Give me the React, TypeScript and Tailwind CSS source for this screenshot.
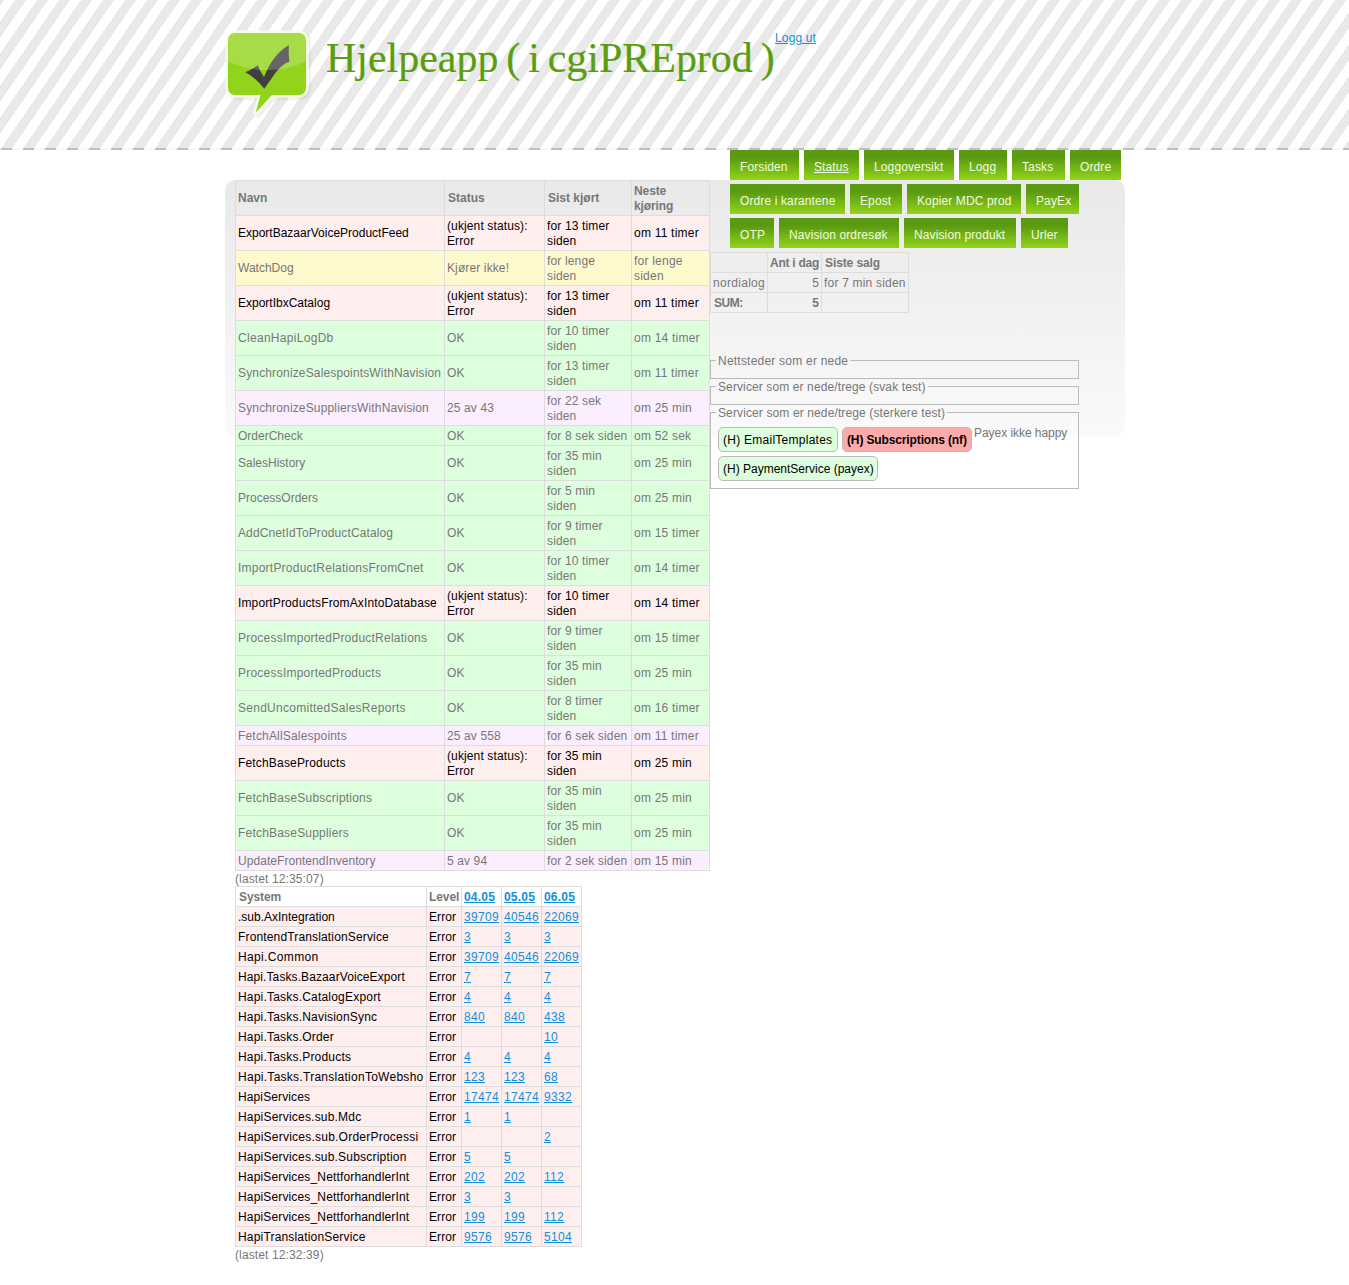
type Task = [kind: string, name: string, spacing: number, status: string, last: string, next: string];

const rowStyles: Record<string, string> = {
  e: 'bg-[#ffeeee] text-black',
  w: 'bg-[#fffacd]',
  o: 'bg-[#ddffdd]',
  r: 'bg-[#fbeeff]',
};

const tasks: Task[] = [
  ['e', 'ExportBazaarVoiceProductFeed', 0, '(ukjent status): Error', 'for 13 timer siden', 'om 11 timer'],
  ['w', 'WatchDog', 0, 'Kjører ikke!', 'for lenge siden', 'for lenge siden'],
  ['e', 'ExportIbxCatalog', 0, '(ukjent status): Error', 'for 13 timer siden', 'om 11 timer'],
  ['o', 'CleanHapiLogDb', 0.3, 'OK', 'for 10 timer siden', 'om 14 timer'],
  ['o', 'SynchronizeSalespointsWithNavision', 0.15, 'OK', 'for 13 timer siden', 'om 11 timer'],
  ['r', 'SynchronizeSuppliersWithNavision', 0.15, '25 av 43', 'for 22 sek siden', 'om 25 min'],
  ['o', 'OrderCheck', 0, 'OK', 'for 8 sek siden', 'om 52 sek'],
  ['o', 'SalesHistory', 0, 'OK', 'for 35 min siden', 'om 25 min'],
  ['o', 'ProcessOrders', 0, 'OK', 'for 5 min siden', 'om 25 min'],
  ['o', 'AddCnetIdToProductCatalog', 0.12, 'OK', 'for 9 timer siden', 'om 15 timer'],
  ['o', 'ImportProductRelationsFromCnet', 0.23, 'OK', 'for 10 timer siden', 'om 14 timer'],
  ['e', 'ImportProductsFromAxIntoDatabase', 0.13, '(ukjent status): Error', 'for 10 timer siden', 'om 14 timer'],
  ['o', 'ProcessImportedProductRelations', 0.23, 'OK', 'for 9 timer siden', 'om 15 timer'],
  ['o', 'ProcessImportedProducts', 0.22, 'OK', 'for 35 min siden', 'om 25 min'],
  ['o', 'SendUncomittedSalesReports', 0.27, 'OK', 'for 8 timer siden', 'om 16 timer'],
  ['r', 'FetchAllSalespoints', 0.18, '25 av 558', 'for 6 sek siden', 'om 11 timer'],
  ['e', 'FetchBaseProducts', 0.17, '(ukjent status): Error', 'for 35 min siden', 'om 25 min'],
  ['o', 'FetchBaseSubscriptions', 0.22, 'OK', 'for 35 min siden', 'om 25 min'],
  ['o', 'FetchBaseSuppliers', 0.2, 'OK', 'for 35 min siden', 'om 25 min'],
  ['r', 'UpdateFrontendInventory', 0.06, '5 av 94', 'for 2 sek siden', 'om 15 min'],
];

const systems: [string, number, string[]][] = [
  ['.sub.AxIntegration', 0, ['39709', '40546', '22069']],
  ['FrontendTranslationService', 0.15, ['3', '3', '3']],
  ['Hapi.Common', 0.36, ['39709', '40546', '22069']],
  ['Hapi.Tasks.BazaarVoiceExport', 0.1, ['7', '7', '7']],
  ['Hapi.Tasks.CatalogExport', 0.2, ['4', '4', '4']],
  ['Hapi.Tasks.NavisionSync', 0.2, ['840', '840', '438']],
  ['Hapi.Tasks.Order', 0.2, ['', '', '10']],
  ['Hapi.Tasks.Products', 0.2, ['4', '4', '4']],
  ['Hapi.Tasks.TranslationToWebsho', 0.27, ['123', '123', '68']],
  ['HapiServices', 0.12, ['17474', '17474', '9332']],
  ['HapiServices.sub.Mdc', 0.2, ['1', '1', '']],
  ['HapiServices.sub.OrderProcessi', 0.23, ['', '', '2']],
  ['HapiServices.sub.Subscription', 0.2, ['5', '5', '']],
  ['HapiServices_NettforhandlerInt', 0.15, ['202', '202', '112']],
  ['HapiServices_NettforhandlerInt', 0.15, ['3', '3', '']],
  ['HapiServices_NettforhandlerInt', 0.15, ['199', '199', '112']],
  ['HapiTranslationService', 0.18, ['9576', '9576', '5104']],
];

const menu: [string, string][][] = [
  [
    ['Forsiden', 'w-[69px]'],
    ['Status', 'w-[55px] underline'],
    ['Loggoversikt', 'w-[90px]'],
    ['Logg', 'w-[48px]'],
    ['Tasks', 'w-[53px]'],
    ['Ordre', 'w-[51px]'],
  ],
  [
    ['Ordre i karantene', 'w-[115px]'],
    ['Epost', 'w-[52px]'],
    ['Kopier MDC prod', 'w-[114px]'],
    ['PayEx', 'w-[53px]'],
  ],
  [
    ['OTP', 'w-[44px]'],
    ['Navision ordresøk', 'w-[120px]'],
    ['Navision produkt', 'w-[112px]'],
    ['Urler', 'w-[47px]'],
  ],
];

const cell = 'border border-[#dddddd] px-[2px] pt-[1px] pb-0 align-middle';
const head = 'border border-[#dddddd] px-[3px] pt-[1px] pb-0 text-left align-middle font-bold';
const link = 'text-[#1090dd] underline';

const bubble =
  'M10 3h64a7 7 0 0 1 7 7v48a7 7 0 0 1-7 7H47L30.700 82.700 35.500 65H10a7 7 0 0 1-7-7V10a7 7 0 0 1 7-7z';

function Logo() {
  return (
    <svg width="90" height="90" viewBox="0 0 90 90" className="shrink-0">
      <defs>
        <filter id="soft" x="-10%" y="-10%" width="125%" height="125%">
          <feDropShadow dx="2" dy="2" stdDeviation="1.2" floodColor="#000" floodOpacity="0.08" />
        </filter>
      </defs>
      <path d={bubble} fill="#f3fee6" stroke="#f3fee6" strokeWidth="5" strokeLinejoin="round" filter="url(#soft)" />
      <path d={bubble} fill="#92d41b" />
      <path
        d="M20.300 42.300Q27 39.500 32.700 35.300 35 41.500 39 47 48 24 64 15 63.300 22 64.300 31.700 57 34 50 43.500L39.300 58.700Q30 47 20.300 42.300z"
        fill="#404040"
      />
      <path d="M10 3h64a7 7 0 0 1 7 7v21Q64 40 42 40T3 31V10a7 7 0 0 1 7-7z" fill="#fff" fillOpacity="0.2" />
    </svg>
  );
}

function Chip({ className, children }: { className: string; children: string }) {
  return (
    <span
      className={`flex h-[25px] items-center rounded-[5px] border border-[#bbbbbb] pt-[1px] pl-[4px] whitespace-nowrap text-black ${className}`}
    >
      {children}
    </span>
  );
}

export default function App() {
  return (
    <div className="h-[1285px] w-[1349px] overflow-hidden bg-white font-['Liberation_Sans',Arial,sans-serif] text-[12px] leading-[15px] text-[#777777]">
      <header className="h-[150px]">
        <div className="h-[148px] bg-[repeating-linear-gradient(124.51deg,#e9e9e9_0px,#e9e9e9_3.3px,#ffffff_3.3px,#ffffff_12.36px,#e9e9e9_12.36px,#e9e9e9_18.13px)] pt-[30px] pl-[225px]">
          <div className="flex items-start">
            <Logo />
            <h1 className="mt-[3px] ml-[11px] w-[449px] font-['Liberation_Serif',serif] text-[42px] leading-[50px] tracking-[-0.02px] whitespace-nowrap text-[#5a9e10] [-webkit-text-stroke:0.2px_#5a9e10] [word-spacing:-2.6px]">
              Hjelpeapp ( i cgiPREprod )
            </h1>
            <a href="#" className={`mt-[1px] tracking-[0.15px] ${link}`}>
              Logg ut
            </a>
          </div>
        </div>
        <div className="h-[2px] bg-[repeating-linear-gradient(90deg,#f7f7f7_0px,#f7f7f7_1px,#bdbdbd_1px,#bdbdbd_12px,#f7f7f7_12px,#f7f7f7_22px)]" />
      </header>

      <div className="relative ml-[225px] w-[900px]">
        <div className="absolute inset-x-0 top-[30px] h-[256px] rounded-[10px] bg-linear-to-b from-[#e9e9e9] to-[#fafafa]" />
        <div className="relative flex items-start pl-[10px]">
          <div className="w-[475px] shrink-0 pt-[30px]">
            <table className="w-[475px] table-fixed border-collapse">
              <colgroup>
                <col className="w-[209px]" />
                <col className="w-[100px]" />
                <col className="w-[87px]" />
                <col className="w-[78px]" />
              </colgroup>
              <thead>
                <tr className="h-[35px]">
                  <th className={`${head} px-[2px]!`}>Navn</th>
                  <th className={head}>Status</th>
                  <th className={head}>Sist kjørt</th>
                  <th className={`${head} px-[2px]! tracking-[-0.1px]`}>Neste kjøring</th>
                </tr>
              </thead>
              <tbody>
                {tasks.map(([kind, name, spacing, status, last, next]) => {
                  const short = /^for \d sek/.test(last);
                  return (
                    <tr key={name} className={`${rowStyles[kind]} ${short ? 'h-[20px]' : 'h-[35px]'}`}>
                      <td className={`${cell} whitespace-nowrap`} style={{ letterSpacing: spacing }}>
                        {name}
                      </td>
                      <td className={`${cell} tracking-[0.12px]`}>{status}</td>
                      <td className={`${cell} tracking-[0.15px] whitespace-nowrap`}>
                        {last.replace(/ siden$/, '')}
                        {short ? ' ' : <br />}
                        siden
                      </td>
                      <td className={`${cell} tracking-[0.22px]`}>{next}</td>
                    </tr>
                  );
                })}
              </tbody>
            </table>
            <p className="relative top-[1px] tracking-[0.12px]">(lastet 12:35:07)</p>
            <table className="w-[347px] table-fixed border-collapse">
              <colgroup>
                <col className="w-[191px]" />
                <col className="w-[35px]" />
                <col className="w-[40px]" />
                <col className="w-[40px]" />
                <col className="w-[40px]" />
              </colgroup>
              <thead>
                <tr className="h-[20px]">
                  <th className={`${head} tracking-[-0.1px]`}>System</th>
                  <th className={`${head} px-[2px]! tracking-[-0.1px]`}>Level</th>
                  {['04.05', '05.05', '06.05'].map((d) => (
                    <th key={d} className={`${head} px-[2px]! tracking-[0.2px]`}>
                      <a href="#" className={link}>
                        {d}
                      </a>
                    </th>
                  ))}
                </tr>
              </thead>
              <tbody>
                {systems.map(([name, spacing, counts], i) => (
                  <tr key={i} className="h-[20px] bg-[#ffeeee] text-black">
                    <td className={`${cell} whitespace-nowrap`} style={{ letterSpacing: spacing }}>
                      {name}
                    </td>
                    <td className={`${cell} tracking-[0.1px]`}>Error</td>
                    {counts.map((c, j) => (
                      <td key={j} className={`${cell} tracking-[0.33px]`}>
                        {c && (
                          <a href="#" className={link}>
                            {c}
                          </a>
                        )}
                      </td>
                    ))}
                  </tr>
                ))}
              </tbody>
            </table>
            <p className="relative top-[1px] tracking-[0.12px]">(lastet 12:32:39)</p>
          </div>

          <div className="w-[415px] shrink-0">
            <nav className="flex flex-col gap-[4px] pl-[20px] tracking-[0.12px]">
              {menu.map((row, i) => (
                <div key={i} className="flex gap-[5px]">
                  {row.map(([label, style]) => (
                    <a
                      key={label}
                      href="#"
                      className={`flex h-[30px] shrink-0 items-center bg-linear-to-b from-[#5a9a10] from-25% to-[#92d41b] pt-[4px] pl-[10px] whitespace-nowrap text-[#f0fde0] ${style}`}
                    >
                      {label}
                    </a>
                  ))}
                </div>
              ))}
            </nav>

            <table className="mt-[4px] w-[199px] table-fixed border-collapse">
              <colgroup>
                <col className="w-[57px]" />
                <col className="w-[54px]" />
                <col className="w-[87px]" />
              </colgroup>
              <tbody>
                <tr className="h-[20px]">
                  <th className={head} />
                  <th className={`${head} px-[2px]! tracking-[-0.25px] whitespace-nowrap`}>Ant i dag</th>
                  <th className={`${head} tracking-[-0.1px]`}>Siste salg</th>
                </tr>
                <tr className="h-[20px]">
                  <td className={`${cell} tracking-[0.3px]`}>nordialog</td>
                  <td className={`${cell} text-right`}>5</td>
                  <td className={`${cell} tracking-[0.2px] whitespace-nowrap`}>for 7 min siden</td>
                </tr>
                <tr className="h-[20px]">
                  <th className={`${head} tracking-[-0.5px]`}>SUM:</th>
                  <th className={`${cell} text-right font-bold`}>5</th>
                  <th className={head} />
                </tr>
              </tbody>
            </table>

            <div className="mt-[40px] w-[369px]">
              <fieldset className="h-[26px] border border-[#bbbbbb] pl-[5px]">
                <legend className="px-[2px] tracking-[0.22px]">
                  <span className="relative top-[1px]">Nettsteder som er nede</span>
                </legend>
              </fieldset>
              <fieldset className="h-[26px] border border-[#bbbbbb] pl-[5px]">
                <legend className="px-[2px] tracking-[0.11px]">
                  <span className="relative top-[1px]">Servicer som er nede/trege (svak test)</span>
                </legend>
              </fieldset>
              <fieldset className="h-[84px] border border-[#bbbbbb] pl-[5px]">
                <legend className="px-[2px] tracking-[0.12px]">
                  <span className="relative top-[1px]">Servicer som er nede/trege (sterkere test)</span>
                </legend>
                <div className="flex flex-wrap items-start gap-y-[4px] pt-[7px] pl-[2px]">
                  <Chip className="mr-[4px] w-[120px] bg-[#ddffdd] tracking-[0.26px]">(H) EmailTemplates</Chip>
                  <Chip className="mr-[2px] w-[130px] bg-[#ffaaaa] font-bold tracking-[-0.13px]">
                    (H) Subscriptions (nf)
                  </Chip>
                  <span className="-mt-[1px] tracking-[-0.05px] whitespace-nowrap">Payex ikke happy</span>
                  <Chip className="w-[160px] bg-[#ddffdd]">(H) PaymentService (payex)</Chip>
                </div>
              </fieldset>
            </div>
          </div>
        </div>
      </div>
    </div>
  );
}
